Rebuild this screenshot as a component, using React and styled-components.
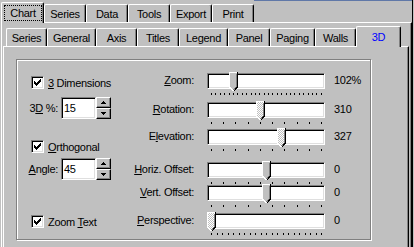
import React, { useId } from "react";
import styled, { createGlobalStyle } from "styled-components";

const GlobalStyle = createGlobalStyle`
  html, body { margin: 0; padding: 0; background: #c0c0c0; }
  #root { width: 414px; height: 247px; }
`;

const Screen = styled.div`
  width: 414px;
  height: 247px;
  overflow: hidden;
  display: flex;
  background: #c0c0c0;
  color: #000;
  font-family: "Liberation Sans", Arial, sans-serif;
  font-size: 11px;
  letter-spacing: -0.3px;
  line-height: 14px;
`;

const Main = styled.div`
  box-sizing: border-box;
  width: 412px;
  padding-left: 1px;
  display: flex;
  flex-direction: column;
  flex: none;
`;

const WindowEdge = styled.div`
  box-sizing: border-box;
  width: 2px;
  flex: none;
  border-left: 1px solid #000;
`;

const TabStrip = styled.div`
  display: flex;
  align-items: flex-end;
  height: ${(p) => p.$h}px;
  padding-left: ${(p) => p.$pl}px;
  position: relative;
  z-index: 1;
  flex: none;
`;

const StripFiller = styled.div`
  flex: 1;
  align-self: stretch;
  border-top: ${(p) => (p.$line ? `1px solid ${p.$line}` : "none")};
`;

const Tab = styled.div`
  box-sizing: border-box;
  flex: none;
  width: ${(p) => p.$w}px;
  height: ${(p) => (p.$selected ? 21 : 18)}px;
  margin-bottom: ${(p) => (p.$selected ? -1 : 0)}px;
  background: #c0c0c0;
  border-top: 1px solid #fff;
  border-left: 1px solid #fff;
  border-right: 1px solid #000;
  border-radius: 2px 2px 0 0;
  box-shadow: inset -1px 0 0 #808080;
  display: flex;
  justify-content: center;
  align-items: ${(p) => (p.$focus ? "stretch" : "center")};
  padding: ${(p) => (p.$focus ? "2px 1px 2px 2px" : p.$selected ? "0" : "1px 0 0 0")};
  white-space: nowrap;
  color: ${(p) => (p.$accent ? "#0000ff" : "#000")};
`;

const FocusRing = styled.span`
  flex: 1;
  display: flex;
  align-items: center;
  justify-content: center;
  border: 1px dotted #000;
`;

const OuterPage = styled.div`
  flex: 1;
  display: flex;
  flex-direction: column;
  border-top: 1px solid #fff;
  border-left: 1px solid #fff;
  border-right: 1px solid #000;
  box-shadow: inset -1px 0 0 #808080;
  padding: 0 1px;
`;

const InnerPage = styled.div`
  flex: 1;
  margin-right: 1px;
  border-top: 1px solid #fff;
  border-left: 1px solid #fff;
  border-right: 1px solid #000;
  box-shadow: inset -1px 0 0 #808080;
  padding: 12px 0 0 12px;
`;

const GroupBox = styled.div`
  box-sizing: border-box;
  width: 355px;
  height: 181px;
  border: 1px solid #808080;
  box-shadow: inset 1px 1px 0 #fff, 1px 1px 0 #fff;
  display: flex;
`;

const LeftCol = styled.div`
  width: 107px;
  flex: none;
  display: flex;
  flex-direction: column;
`;

const RightCol = styled.div`
  flex: 1;
  display: flex;
  flex-direction: column;
  padding-top: 13px;
`;

const CheckRow = styled.label`
  display: flex;
  align-items: center;
  gap: 4px;
  height: 13px;
  padding-left: 14px;
  margin-top: ${(p) => p.$mt}px;
  white-space: nowrap;
`;

const CheckBox = styled.span`
  box-sizing: border-box;
  width: 13px;
  height: 13px;
  flex: none;
  background: #fff;
  border-top: 1px solid #808080;
  border-left: 1px solid #808080;
  border-bottom: 1px solid #fff;
  border-right: 1px solid #fff;
  box-shadow: inset 1px 1px 0 #000, inset -1px -1px 0 #dfdfdf;
  display: flex;
  align-items: center;
  justify-content: center;
`;

const SpinRow = styled.div`
  display: flex;
  align-items: center;
  height: 22px;
  margin-top: ${(p) => p.$mt}px;
`;

const SpinLabel = styled.span`
  width: 41px;
  margin-right: 3px;
  text-align: right;
  white-space: nowrap;
`;

const EditBox = styled.div`
  box-sizing: border-box;
  width: 35px;
  height: 22px;
  background: #fff;
  border-top: 1px solid #808080;
  border-left: 1px solid #808080;
  border-bottom: 1px solid #fff;
  border-right: 1px solid #fff;
  box-shadow: inset 1px 1px 0 #000, inset -1px -1px 0 #dfdfdf;
  padding: 3px 0 0 2px;
`;

const SpinButtons = styled.div`
  width: 15px;
  height: 22px;
  display: flex;
  flex-direction: column;
`;

const SpinBtn = styled.div`
  box-sizing: border-box;
  flex: 1;
  background: #c0c0c0;
  border-top: 1px solid #fff;
  border-left: 1px solid #fff;
  border-bottom: 1px solid #000;
  border-right: 1px solid #000;
  box-shadow: inset -1px -1px 0 #808080;
  display: flex;
  align-items: center;
  justify-content: center;
`;

const SliderRow = styled.div`
  display: flex;
  align-items: flex-start;
  margin-top: ${(p) => p.$mt}px;
`;

const SliderLabel = styled.span`
  width: 70px;
  flex: none;
  text-align: right;
  white-space: nowrap;
  margin-right: 13px;
`;

const TrackWrap = styled.div`
  position: relative;
  width: 118px;
  flex: none;
  display: flex;
  flex-direction: column;
`;

const Track = styled.div`
  box-sizing: border-box;
  height: 16px;
  background: #fff;
  border-top: 1px solid #808080;
  border-left: 1px solid #808080;
  border-bottom: 1px solid #fff;
  border-right: 1px solid #fff;
  box-shadow: inset 1px 1px 0 #000, inset -1px -1px 0 #dfdfdf;
`;

const Ticks = styled.div`
  display: flex;
  justify-content: space-between;
  height: 2px;
  margin-top: 4px;
  padding: 0 3px 0 4px;
`;

const Tick = styled.span`
  width: 1px;
  height: 2px;
  background: #000;
`;

const ThumbBox = styled.div`
  position: absolute;
  top: -1px;
  width: 9px;
  height: 20px;
  display: flex;
`;

const Value = styled.span`
  margin-left: 9px;
  white-space: nowrap;
`;

const Under = styled.u`
  text-decoration: underline;
  text-underline-offset: 1px;
`;

function CheckMark() {
  return (
    <svg width="7" height="7" viewBox="0 0 7 7" shapeRendering="crispEdges">
      <path
        fill="#000"
        d="M6 0h1v1h-1z M5 1h2v1h-2z M0 2h1v1h-1z M4 2h3v1h-3z M0 3h2v1h-2z M3 3h3v1h-3z M0 4h5v1h-5z M1 5h3v1h-3z M2 6h1v1h-1z"
      />
    </svg>
  );
}

function Arrow({ up }) {
  return (
    <svg width="5" height="3" viewBox="0 0 5 3" shapeRendering="crispEdges">
      <path fill="#000" d={up ? "M2 0h1v1h-1z M1 1h3v1h-3z M0 2h5v1h-5z" : "M0 0h5v1h-5z M1 1h3v1h-3z M2 2h1v1h-1z"} />
    </svg>
  );
}

function Thumb({ left, dither }) {
  const id = "p" + useId().replace(/[^a-zA-Z0-9]/g, "");
  return (
    <ThumbBox style={{ left }}>
      <svg width="9" height="20" viewBox="0 0 9 20" shapeRendering="crispEdges">
        <defs>
          <pattern id={id} width="2" height="2" patternUnits="userSpaceOnUse">
            <rect width="2" height="2" fill="#c0c0c0" />
            <rect width="1" height="1" fill="#fff" />
            <rect x="1" y="1" width="1" height="1" fill="#fff" />
          </pattern>
        </defs>
        <path d="M0 0H9V15L4.5 19.5L0 15Z" fill={dither ? `url(#${id})` : "#c0c0c0"} />
        <path d="M0.5 15V0.5H8" stroke="#fff" fill="none" />
        <path d="M0.5 15L4.5 19" stroke="#fff" fill="none" />
        <path d="M7.5 1.5V15L4.5 18" stroke="#808080" fill="none" />
        <path d="M8.5 0V15L4.5 19.5" stroke="#000" fill="none" />
      </svg>
    </ThumbBox>
  );
}

function Slider({ label, value, min, max, ticks, display, dither, mt }) {
  const frac = (value - min) / (max - min);
  const left = Math.round(frac * 110);
  return (
    <SliderRow $mt={mt}>
      <SliderLabel>{label}</SliderLabel>
      <TrackWrap>
        <Track />
        <Ticks>
          {Array.from({ length: ticks + 1 }, (_, i) => (
            <Tick key={i} />
          ))}
        </Ticks>
        <Thumb left={left} dither={dither} />
      </TrackWrap>
      <Value>{display}</Value>
    </SliderRow>
  );
}

function Check({ children, mt }) {
  return (
    <CheckRow $mt={mt}>
      <CheckBox>
        <CheckMark />
      </CheckBox>
      <span>{children}</span>
    </CheckRow>
  );
}

function SpinEdit({ label, value, mt }) {
  return (
    <SpinRow $mt={mt}>
      <SpinLabel>{label}</SpinLabel>
      <EditBox>{value}</EditBox>
      <SpinButtons>
        <SpinBtn>
          <Arrow up />
        </SpinBtn>
        <SpinBtn>
          <Arrow />
        </SpinBtn>
      </SpinButtons>
    </SpinRow>
  );
}

const outerTabs = [
  { label: "Chart", w: 43, selected: true, focus: true },
  { label: "Series", w: 42 },
  { label: "Data", w: 42 },
  { label: "Tools", w: 42 },
  { label: "Export", w: 42 },
  { label: "Print", w: 42 },
];

const innerTabs = [
  { label: "Series", w: 41 },
  { label: "General", w: 49 },
  { label: "Axis", w: 41 },
  { label: "Titles", w: 42 },
  { label: "Legend", w: 49 },
  { label: "Panel", w: 42 },
  { label: "Paging", w: 45 },
  { label: "Walls", w: 41 },
  { label: "3D", w: 45, selected: true, accent: true },
];

export default function App() {
  return (
    <>
      <GlobalStyle />
      <Screen>
        <Main>
          <TabStrip $h={22} $pl={0}>
            {outerTabs.map((t) => (
              <Tab key={t.label} $w={t.w} $selected={t.selected} $focus={t.focus}>
                {t.focus ? <FocusRing>{t.label}</FocusRing> : t.label}
              </Tab>
            ))}
            <StripFiller $line="#6078a8" />
          </TabStrip>
          <OuterPage>
            <TabStrip $h={23} $pl={3}>
              {innerTabs.map((t) => (
                <Tab key={t.label} $w={t.w} $selected={t.selected} $accent={t.accent}>
                  {t.label}
                </Tab>
              ))}
            </TabStrip>
            <InnerPage>
              <GroupBox>
                <LeftCol>
                  <Check mt={16}>
                    <Under>3</Under> Dimensions
                  </Check>
                  <SpinEdit
                    mt={8}
                    value="15"
                    label={
                      <>
                        3<Under>D</Under> %:
                      </>
                    }
                  />
                  <Check mt={21}>
                    <Under>O</Under>rthogonal
                  </Check>
                  <SpinEdit
                    mt={5}
                    value="45"
                    label={
                      <>
                        <Under>A</Under>ngle:
                      </>
                    }
                  />
                  <Check mt={35}>
                    Zoom <Under>T</Under>ext
                  </Check>
                </LeftCol>
                <RightCol>
                  <Slider
                    mt={0}
                    label={<><Under>Z</Under>oom:</>}
                    value={102}
                    min={1}
                    max={500}
                    ticks={25}
                    display="102%"
                  />
                  <Slider
                    mt={7}
                    label={<><Under>R</Under>otation:</>}
                    value={310}
                    min={270}
                    max={360}
                    ticks={9}
                    display="310"
                    dither
                  />
                  <Slider
                    mt={5}
                    label={<>E<Under>l</Under>evation:</>}
                    value={327}
                    min={270}
                    max={360}
                    ticks={9}
                    display="327"
                    dither
                  />
                  <Slider
                    mt={11}
                    label={<><Under>H</Under>oriz. Offset:</>}
                    value={0}
                    min={-100}
                    max={100}
                    ticks={9}
                    display="0"
                  />
                  <Slider
                    mt={1}
                    label={<><Under>V</Under>ert. Offset:</>}
                    value={0}
                    min={-100}
                    max={100}
                    ticks={9}
                    display="0"
                  />
                  <Slider
                    mt={6}
                    label={<><Under>P</Under>erspective:</>}
                    value={0}
                    min={0}
                    max={100}
                    ticks={20}
                    display="0"
                    dither
                  />
                </RightCol>
              </GroupBox>
            </InnerPage>
          </OuterPage>
        </Main>
        <WindowEdge />
      </Screen>
    </>
  );
}
